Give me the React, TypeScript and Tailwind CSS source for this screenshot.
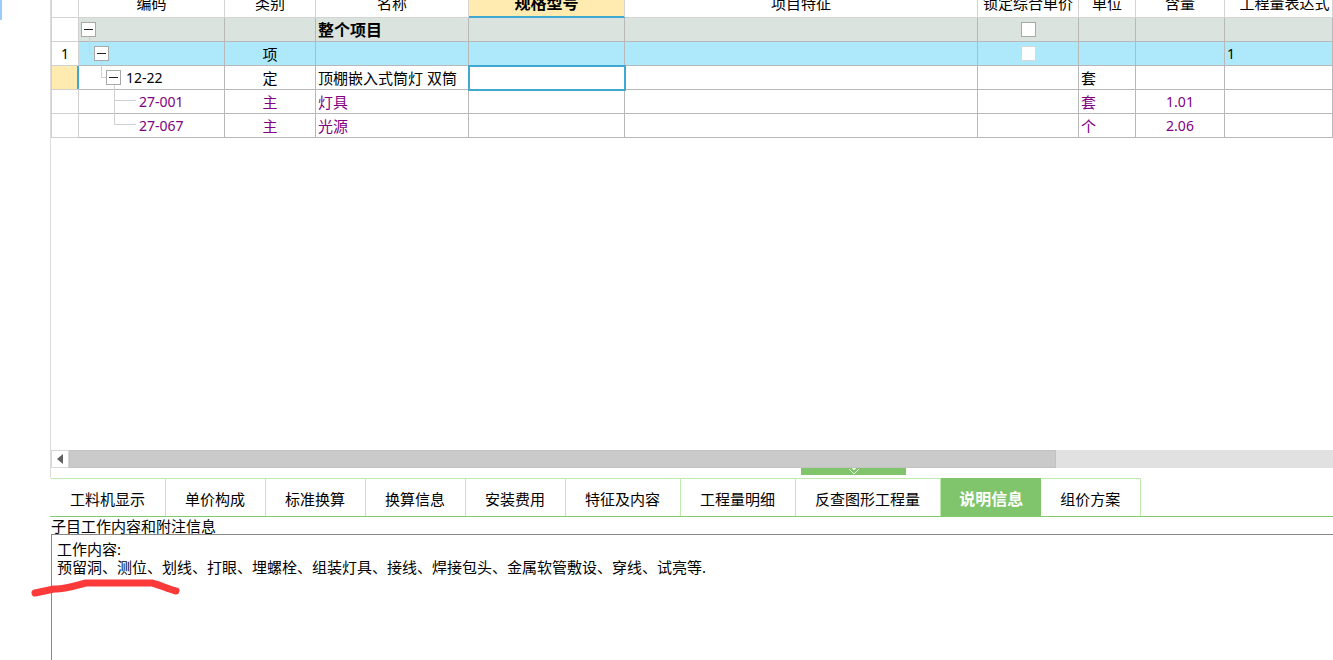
import { useState } from 'react';
import type { ReactNode } from 'react';
import clsx from 'clsx';

interface QuotaRow {
  id: string;
  index?: string;
  code?: string;
  kind?: string;
  name?: string;
  lock?: 'enabled' | 'disabled';
  unit?: string;
  amount?: string;
  expression?: string;
  toggle?: string;
  codeIndent?: string;
  treePath?: string;
  rowClass?: string;
  active?: boolean;
}

const rows: QuotaRow[] = [
  {
    id: 'root',
    name: '整个项目',
    lock: 'enabled',
    toggle: 'ml-[2px]',
    treePath: 'M10.5 19V24',
    rowClass: 'bg-[#dae3dd] font-bold text-base/5',
  },
  {
    id: 'item',
    index: '1',
    kind: '项',
    lock: 'disabled',
    expression: '1',
    toggle: 'ml-[15px]',
    treePath: 'M10.5 0V11.5H15M22.5 19V24',
    rowClass: 'bg-[#aee8fb]',
  },
  {
    id: '12-22',
    code: '12-22',
    kind: '定',
    name: '顶棚嵌入式筒灯 双筒',
    unit: '套',
    toggle: 'ml-[27px]',
    codeIndent: 'ml-[5px]',
    treePath: 'M22.5 0V11.5H27M35.5 19V24',
    active: true,
  },
  {
    id: '27-001',
    code: '27-001',
    kind: '主',
    name: '灯具',
    unit: '套',
    amount: '1.01',
    codeIndent: 'ml-[60px]',
    treePath: 'M35.5 0V24M35.5 10.5H57',
    rowClass: 'text-[#800080]',
  },
  {
    id: '27-067',
    code: '27-067',
    kind: '主',
    name: '光源',
    unit: '个',
    amount: '2.06',
    codeIndent: 'ml-[60px]',
    treePath: 'M35.5 0V10.5H57',
    rowClass: 'text-[#800080]',
  },
];

const tabs = [
  '工料机显示',
  '单价构成',
  '标准换算',
  '换算信息',
  '安装费用',
  '特征及内容',
  '工程量明细',
  '反查图形工程量',
  '说明信息',
  '组价方案',
];

const workContent =
  '工作内容:\n预留洞、测位、划线、打眼、埋螺栓、组装灯具、接线、焊接包头、金属软管敷设、穿线、试亮等.';

function HeaderCell({ children, selected }: { children?: ReactNode; selected?: boolean }) {
  return (
    <th
      className={clsx(
        'border-x border-b border-[#d4d4d4] p-0',
        selected
          ? 'border-b-[#3fa9d2] bg-[#ffebb0] text-base font-bold shadow-[inset_0_-1px_0_#3fa9d2]'
          : 'font-normal',
      )}
    >
      <div className="flex h-[17px] items-end justify-center whitespace-nowrap pb-[6px] leading-4">{children}</div>
    </th>
  );
}

function Cell({ children, className }: { children?: ReactNode; className?: string }) {
  return (
    <td className={clsx('overflow-hidden whitespace-nowrap border border-[#b8b8b8] p-0', className)}>{children}</td>
  );
}

// Code column: connector lines, collapse button and quota number
function CodeCell({ row }: { row: QuotaRow }) {
  return (
    <td className="border border-[#b8b8b8] p-0">
      <div className="relative flex h-[23px] items-center">
        <svg className="absolute left-0 top-0" width="60" height="24" fill="none" stroke="#d0d0d0" aria-hidden="true">
          <path d={row.treePath} />
        </svg>
        {row.toggle && (
          <button
            type="button"
            aria-label="折叠"
            className={clsx(
              'relative flex size-[15px] items-center justify-center border border-[#a8a8a8] bg-white',
              row.toggle,
            )}
          >
            <span className="h-px w-[9px] bg-[#222]" />
          </button>
        )}
        <span className={clsx('text-sm', row.codeIndent)}>{row.code}</span>
      </div>
    </td>
  );
}

function QuotaTable() {
  return (
    <table className="w-full table-fixed border-collapse text-[15px] leading-5">
      <colgroup>
        <col className="w-[27px]" />
        <col className="w-[146px]" />
        <col className="w-[91px]" />
        <col className="w-[153px]" />
        <col className="w-[156px]" />
        <col />
        <col className="w-[101px]" />
        <col className="w-[57px]" />
        <col className="w-[89px]" />
        <col className="w-[108px]" />
      </colgroup>
      <thead>
        <tr>
          <HeaderCell />
          <HeaderCell>编码</HeaderCell>
          <HeaderCell>类别</HeaderCell>
          <HeaderCell>名称</HeaderCell>
          <HeaderCell selected>规格型号</HeaderCell>
          <HeaderCell>项目特征</HeaderCell>
          <HeaderCell>锁定综合单价</HeaderCell>
          <HeaderCell>单位</HeaderCell>
          <HeaderCell>含量</HeaderCell>
          <HeaderCell>
            <span className="pl-3">工程量表达式</span>
          </HeaderCell>
        </tr>
      </thead>
      <tbody>
        {rows.map((row) => (
          <tr key={row.id} className={clsx('h-6', row.rowClass)}>
            <td
              className={clsx(
                'border border-[#d0d0d0] p-0 text-center text-sm/5',
                row.active ? 'border-r-[#3fa9d2] bg-[#ffebb0] shadow-[inset_-1px_0_0_#3fa9d2]' : 'bg-white',
              )}
            >
              {row.index}
            </td>
            <CodeCell row={row} />
            <Cell className="text-center">{row.kind}</Cell>
            <Cell className="pl-[2px]">{row.name}</Cell>
            <Cell className={row.active ? 'outline-2 -outline-offset-1 outline-[#3fa9d2]' : undefined} />
            <Cell />
            <Cell>
              {row.lock && (
                <input
                  type="checkbox"
                  aria-label="锁定综合单价"
                  disabled={row.lock === 'disabled'}
                  className="mx-auto block size-[15px] appearance-none border border-[#a8a8a8] bg-white disabled:border-[#d8d8d8]"
                />
              )}
            </Cell>
            <Cell className="pl-[2px]">{row.unit}</Cell>
            <Cell className="text-center text-sm/5">{row.amount}</Cell>
            <Cell className="pl-[2px] text-sm/5">{row.expression}</Cell>
          </tr>
        ))}
      </tbody>
    </table>
  );
}

function ScrollBar() {
  return (
    <div className="flex h-[18px] bg-[#e1e1e1]">
      <button
        type="button"
        aria-label="向左滚动"
        className="flex w-[18px] items-center justify-center border border-[#d8d8d8] bg-white"
      >
        <svg width="6" height="10" viewBox="0 0 6 10" fill="#606060">
          <path d="M6 0V10L0 5Z" />
        </svg>
      </button>
      <div className="w-[77%] border border-[#c2c2c2] bg-[#cacaca]" />
    </div>
  );
}

export default function App() {
  const [activeTab, setActiveTab] = useState('说明信息');

  return (
    <div className="relative flex h-screen overflow-hidden bg-white font-['Noto_Sans','Noto_Sans_CJK_SC',sans-serif] text-[15px] text-black">
      <div className="w-[50px] shrink-0">
        <div className="h-5 w-[2px] bg-[#99ccff]" />
      </div>

      <div className="flex min-w-0 flex-1 flex-col">
        <div className="min-h-0 flex-1 overflow-hidden border-l border-[#dcdcdc]">
          <QuotaTable />
        </div>

        <div className="shrink-0 border-l border-[#dcdcdc]">
          <ScrollBar />
          {/* Splitter handle */}
          <div className="h-[10px] pl-[750px]">
            <button
              type="button"
              aria-label="收起面板"
              className="flex h-[7px] w-[105px] items-start justify-center bg-[#80c46c]"
            >
              <svg width="12" height="7" viewBox="0 0 12 7" fill="none" stroke="#e4f4df">
                <path d="M4 0H8L6 2Z" fill="#fff" />
                <path d="M1 1L6 6L11 1" />
              </svg>
            </button>
          </div>
        </div>

        <div role="tablist" className="flex h-[39px] shrink-0 border-b border-[#7fcb6c] pl-px">
          {tabs.map((tab) => (
            <button
              key={tab}
              type="button"
              role="tab"
              aria-selected={tab === activeTab}
              onClick={() => setActiveTab(tab)}
              className={clsx(
                'shrink-0 border-r border-t pt-[3px]',
                tab === activeTab
                  ? 'border-[#80c46c] bg-[#80c46c] pl-[18px] pr-[17px] text-base font-bold text-white'
                  : 'border-[#bfeaae] pl-[19px] pr-5',
              )}
            >
              {tab}
            </button>
          ))}
        </div>

        <div className="flex shrink-0 flex-col">
          <label htmlFor="work-content" className="h-[17px] pl-px leading-[18px]">
            子目工作内容和附注信息
          </label>
          <textarea
            id="work-content"
            readOnly
            value={workContent}
            className="ml-px h-[126px] resize-none border-l border-t border-[#888] px-[5px] pt-[5px] leading-[18px] outline-none"
          />
        </div>
      </div>

      {/* Red marker stroke under the first items */}
      <svg
        className="pointer-events-none absolute left-[30px] top-[578px]"
        width="152"
        height="22"
        viewBox="0 0 152 22"
        fill="none"
        stroke="#fc3a3a"
        strokeLinecap="round"
        strokeLinejoin="round"
        aria-hidden="true"
      >
        <path d="M5 15L24 11C32 12 44 8 56 5H122C130 7 138 11 146 13" strokeWidth="7" />
      </svg>
    </div>
  );
}
